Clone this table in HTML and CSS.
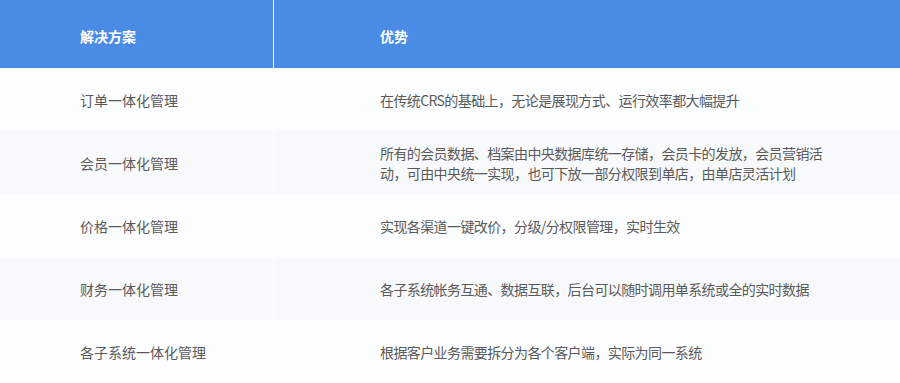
FILE: index.html
```html
<!DOCTYPE html>
<html lang="zh-CN">
<head>
<meta charset="utf-8">
<title>解决方案</title>
<link rel="stylesheet" href="styles.css">
</head>
<body>
<div class="table">
  <div class="row head">
    <div class="cell c1">解决方案</div>
    <div class="cell c2">优势</div>
  </div>
  <div class="row odd">
    <div class="cell c1">订单一体化管理</div>
    <div class="cell c2"><span class="txt">在传统CRS的基础上，无论是展现方式、运行效率都大幅提升</span></div>
  </div>
  <div class="row even">
    <div class="cell c1">会员一体化管理</div>
    <div class="cell c2"><span class="txt">所有的会员数据、档案由中央数据库统一存储，会员卡的发放，会员营销活动，可由中央统一实现，也可下放一部分权限到单店，由单店灵活计划</span></div>
  </div>
  <div class="row odd">
    <div class="cell c1">价格一体化管理</div>
    <div class="cell c2"><span class="txt">实现各渠道一键改价，分级/分权限管理，实时生效</span></div>
  </div>
  <div class="row even">
    <div class="cell c1">财务一体化管理</div>
    <div class="cell c2"><span class="txt">各子系统帐务互通、数据互联，后台可以随时调用单系统或全的实时数据</span></div>
  </div>
  <div class="row odd">
    <div class="cell c1">各子系统一体化管理</div>
    <div class="cell c2"><span class="txt">根据客户业务需要拆分为各个客户端，实际为同一系统</span></div>
  </div>
</div>
</body>
</html>
```

FILE: styles.css
```css
html, body {
  margin: 0;
  padding: 0;
  background: #ffffff;
}
body {
  font-family: "Noto Sans CJK SC", "Noto Sans", sans-serif;
  font-size: 14px;
  color: #5a5a5a;
}
.table {
  width: 900px;
  display: flex;
  flex-direction: column;
}
.row {
  display: flex;
  height: 63px;
}
.row.head {
  height: 68px;
  background: #4a8be6;
  color: #ffffff;
  font-weight: bold;
}
.row.odd {
  background: #fcfdff;
}
.row.even {
  background: #f8f9fa;
}
.cell {
  display: flex;
  align-items: center;
  line-height: 20px;
  box-sizing: border-box;
}
.c1 {
  width: 274px;
  padding-left: 80px;
  border-right: 1px solid #ffffff;
}
.head .c1,
.head .c2 {
  padding-top: 4px;
}
.c2 {
  flex: 1;
  padding-left: 106px;
}
.txt {
  display: block;
  max-width: 445px;
  letter-spacing: -0.6px;
}
```
